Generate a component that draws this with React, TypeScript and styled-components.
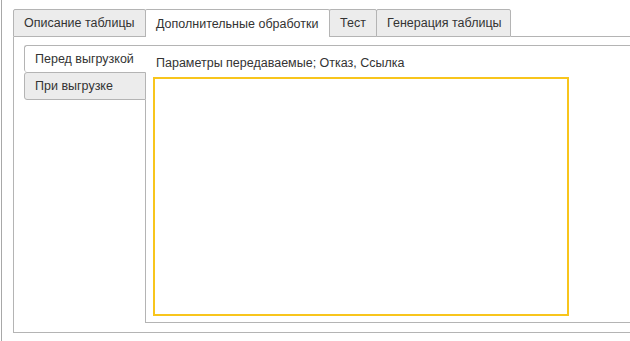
import React, { useState } from "react";
import styled, { createGlobalStyle } from "styled-components";

const GlobalStyle = createGlobalStyle`
  html, body {
    margin: 0;
    padding: 0;
    background: #ffffff;
  }
  body {
    font-family: "Liberation Sans", Arial, sans-serif;
    font-size: 12.5px;
    color: #333333;
  }
`;

const Page = styled.div`
  width: 630px;
  height: 341px;
  display: flex;
  overflow: hidden;
  background: #ffffff;
`;

const LeftRule = styled.div`
  width: 1px;
  margin-left: 1px;
  flex-shrink: 0;
  background: #a8a8a8;
`;

const Main = styled.div`
  flex: 1;
  min-width: 0;
  margin-left: 11px;
  padding-top: 9px;
  display: flex;
  flex-direction: column;
  height: 324px;
`;

const TabBar = styled.div`
  display: flex;
  height: 28px;
  flex-shrink: 0;
`;

const Tab = styled.div<{ active?: boolean; width: number }>`
  box-sizing: border-box;
  width: ${(p) => p.width}px;
  height: 28px;
  display: flex;
  align-items: center;
  padding-left: 10px;
  margin-left: -1px;
  white-space: nowrap;
  cursor: default;
  border: 1px solid #b4b4b4;
  border-bottom: ${(p) => (p.active ? "none" : "1px solid #b4b4b4")};
  border-radius: 2px 2px 0 0;
  background: ${(p) => (p.active ? "#ffffff" : "#ececec")};
  &:first-child {
    margin-left: 0;
  }
`;

const TabFill = styled.div`
  flex: 1;
  border-bottom: 1px solid #b4b4b4;
  margin-right: -200px;
`;

const Panel = styled.div`
  flex: 1;
  display: flex;
  box-sizing: border-box;
  padding: 8px 0 9px 10px;
  margin-right: -200px;
  border-left: 1px solid #b4b4b4;
  border-bottom: 1px solid #b4b4b4;
`;

const VTabList = styled.div`
  width: 122px;
  flex-shrink: 0;
  display: flex;
  flex-direction: column;
`;

const VTab = styled.div<{ active?: boolean }>`
  box-sizing: border-box;
  display: flex;
  align-items: center;
  padding-left: 10px;
  white-space: nowrap;
  cursor: default;
  height: ${(p) => (p.active ? "27px" : "28px")};
  border: 1px solid #b4b4b4;
  border-right: ${(p) => (p.active ? "none" : "1px solid #b4b4b4")};
  border-bottom: ${(p) => (p.active ? "none" : "1px solid #b4b4b4")};
  border-radius: 3px 0 0 3px;
  background: ${(p) => (p.active ? "#ffffff" : "#ececec")};
`;

const VTabFill = styled.div`
  flex: 1;
  border-right: 1px solid #b4b4b4;
`;

const Content = styled.div`
  flex: 1;
  display: flex;
  flex-direction: column;
  box-sizing: border-box;
  padding: 9px 0 6px 7px;
  border-top: 1px solid #b4b4b4;
  border-bottom: 1px solid #b4b4b4;
`;

const Caption = styled.div`
  height: 16px;
  line-height: 16px;
  padding-left: 3px;
  margin-bottom: 6px;
  white-space: nowrap;
`;

const Editor = styled.textarea`
  box-sizing: border-box;
  width: 416px;
  flex: 1;
  border: 2px solid #f8c51c;
  outline: none;
  resize: none;
  margin: 0;
  padding: 4px;
  font-family: "Liberation Sans", Arial, sans-serif;
  font-size: 12.5px;
  color: #333333;
  background: #ffffff;
`;

const tabs = [
  { title: "Описание таблицы", width: 133 },
  { title: "Дополнительные обработки", width: 185 },
  { title: "Тест", width: 48 },
  { title: "Генерация таблицы", width: 135 },
];
const sideTabs = ["Перед выгрузкой", "При выгрузке"];

export default function App() {
  const [tab, setTab] = useState(1);
  const [side, setSide] = useState(0);

  return (
    <>
      <GlobalStyle />
      <Page>
        <LeftRule />
        <Main>
          <TabBar>
            {tabs.map((t, i) => (
              <Tab key={t.title} width={t.width} active={i === tab} onClick={() => setTab(i)}>
                {t.title}
              </Tab>
            ))}
            <TabFill />
          </TabBar>
          <Panel>
            <VTabList>
              {sideTabs.map((t, i) => (
                <VTab key={t} active={i === side} onClick={() => setSide(i)}>
                  {t}
                </VTab>
              ))}
              <VTabFill />
            </VTabList>
            <Content>
              <Caption>Параметры передаваемые; Отказ, Ссылка</Caption>
              <Editor />
            </Content>
          </Panel>
        </Main>
      </Page>
    </>
  );
}
